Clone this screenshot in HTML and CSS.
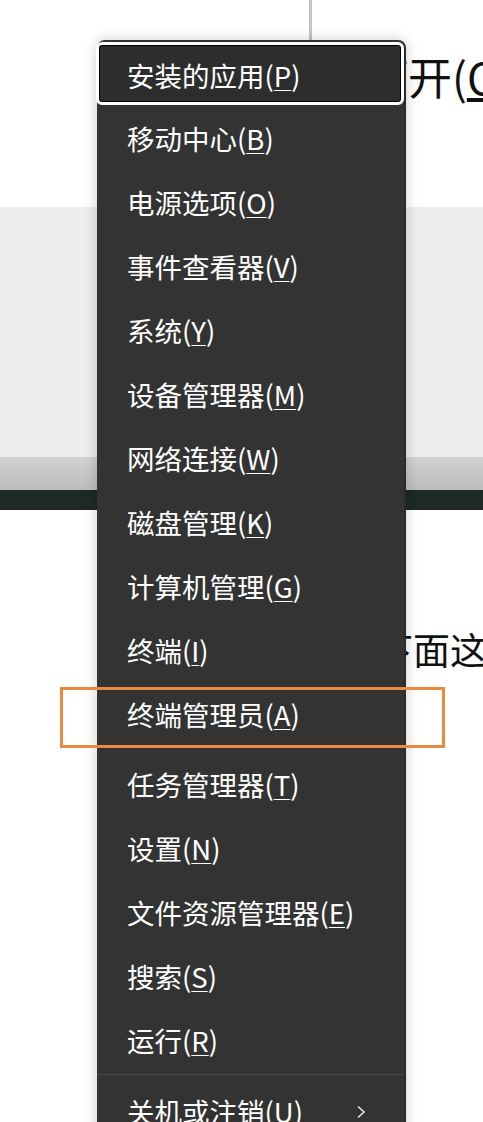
FILE: index.html
```html
<!DOCTYPE html>
<html lang="zh-CN">
<head>
	<meta charset="UTF-8">
	<title>快速链接菜单</title>
	<link rel="stylesheet" href="styles.css">
</head>
<body>
	<div class="page">
		<div class="vline"></div>
		<p class="title">打开(<u>O</u>)</p>
		<div class="panel"></div>
		<div class="band"></div>
		<div class="dark"></div>
		<p class="para">下面这个</p>

		<div class="menu">
			<div class="item focus"><span>安装的应用(<u>P</u>)</span></div>
			<div class="item"><span>移动中心(<u>B</u>)</span></div>
			<div class="item"><span>电源选项(<u>O</u>)</span></div>
			<div class="item"><span>事件查看器(<u>V</u>)</span></div>
			<div class="item"><span>系统(<u>Y</u>)</span></div>
			<div class="item"><span>设备管理器(<u>M</u>)</span></div>
			<div class="item"><span>网络连接(<u>W</u>)</span></div>
			<div class="item"><span>磁盘管理(<u>K</u>)</span></div>
			<div class="item"><span>计算机管理(<u>G</u>)</span></div>
			<div class="item"><span>终端(<u>I</u>)</span></div>
			<div class="item"><span>终端管理员(<u>A</u>)</span></div>
			<div class="item gap"><span>任务管理器(<u>T</u>)</span></div>
			<div class="item"><span>设置(<u>N</u>)</span></div>
			<div class="item"><span>文件资源管理器(<u>E</u>)</span></div>
			<div class="item"><span>搜索(<u>S</u>)</span></div>
			<div class="item"><span>运行(<u>R</u>)</span></div>
			<div class="sep"></div>
			<div class="item sub">
				<span>关机或注销(<u>U</u>)</span>
				<svg class="chev" width="10" height="14" viewBox="0 0 10 14">
					<polyline points="2,1.5 8,7 2,12.5" fill="none" stroke="#e6e6e6" stroke-width="1.6"/>
				</svg>
			</div>
		</div>

		<div class="mark"></div>
	</div>
</body>
</html>
```

FILE: styles.css
```css
*{margin:0px;padding:0px;box-sizing:border-box;}
body{
	background: #fff;
	font-family: "Noto Sans CJK SC", "Noto Sans", sans-serif;
}
.page{
	position: relative;
	width: 483px;
	height: 1122px;
	overflow: hidden;
	background: #fff;
}
.vline{
	margin-left: 309px;
	width: 3px;
	height: 40px;
	background: #c4c4c4;
}
.title{
	margin-top: 6px;
	padding-left: 364px;
	height: 60px;
	font-size: 44px;
	line-height: 60px;
	color: #111;
	white-space: nowrap;
}
.panel{
	margin-top: 101px;
	height: 250px;
	background: #eeeeee;
}
.band{
	height: 33px;
	background: linear-gradient(#d2d2d2, #bcbcbc);
}
.dark{
	height: 20px;
	background: #1d2a25;
}
.para{
	margin-top: 114px;
	padding-left: 376px;
	height: 50px;
	font-size: 37px;
	line-height: 50px;
	color: #111;
	white-space: nowrap;
}
.menu{
	position: absolute;
	left: 97px;
	top: 40px;
	width: 309px;
	height: 1100px;
	padding-top: 2px;
	background: #333;
	border-right: 2px solid #2a2a2a;
	border-radius: 8px 8px 0 0;
	box-shadow: 0 0 14px rgba(0,0,0,0.2);
}
.menu .item{
	display: flex;
	align-items: center;
	justify-content: space-between;
	height: 64px;
	padding: 4px 38px 0 30px;
	font-size: 27.5px;
	line-height: 1;
	color: #fff;
	white-space: nowrap;
}
.menu .item u{
	text-decoration-thickness: 1px;
	text-underline-offset: 3px;
}
.menu .focus{
	height: 63px;
	margin-left: -1px;
	padding-left: 28px;
	border: 3px solid #fff;
	border-radius: 6px;
	background: #2d2d2d;
	box-shadow: inset 0 0 0 1px #000;
}
.menu .gap{
	margin-top: 6px;
}
.menu .sep{
	height: 1px;
	margin: 3px 0;
	background: #474747;
}
.chev{
	display: block;
}
.mark{
	position: absolute;
	left: 60px;
	top: 687px;
	width: 385px;
	height: 61px;
	border: 3px solid #ea8a3e;
}
```
